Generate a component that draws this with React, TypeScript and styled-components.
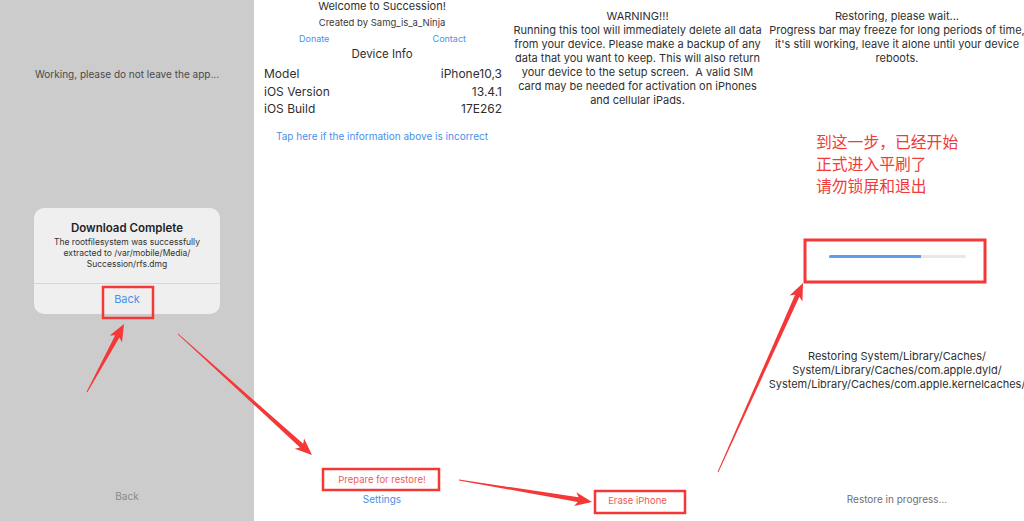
import React from "react";
import styled, { createGlobalStyle } from "styled-components";

const Global = createGlobalStyle`
  html, body { margin: 0; padding: 0; background: #ffffff; }
  body { font-family: Inter, "Open Sans", "Noto Sans", sans-serif; -webkit-font-smoothing: antialiased; }
`;

const Page = styled.div`
  position: relative;
  width: 1024px;
  height: 521px;
  overflow: hidden;
  display: grid;
  grid-template-columns: 254px 256px 255px 264px;
  background: #ffffff;
`;

const Panel = styled.section<{ $gray?: boolean }>`
  height: 521px;
  display: flex;
  flex-direction: column;
  align-items: stretch;
  background: ${(p) => (p.$gray ? "#cccccc" : "#ffffff")};
  color: #333333;
  overflow: hidden;
`;

const Line = styled.div<{ $size?: number; $lh?: number; $mt?: number; $color?: string; $weight?: number }>`
  font-size: ${(p) => p.$size ?? 11}px;
  line-height: ${(p) => p.$lh ?? 14}px;
  margin-top: ${(p) => p.$mt ?? 0}px;
  color: ${(p) => p.$color ?? "#333333"};
  font-weight: ${(p) => p.$weight ?? 400};
  text-align: center;
  white-space: nowrap;
`;

const Bottom = styled.div<{ $pb: number }>`
  margin-top: auto;
  padding-bottom: ${(p) => p.$pb}px;
  display: flex;
  flex-direction: column;
  align-items: center;
  gap: 5px;
`;

const Dialog = styled.div`
  margin: 127px auto 0;
  width: 186px;
  background: #efefef;
  border-radius: 10px;
  display: flex;
  flex-direction: column;
  align-items: center;
`;

const DialogBody = styled.div`
  padding: 13px 8px 13px;
  display: flex;
  flex-direction: column;
  align-items: center;
`;

const DialogFooter = styled.div`
  align-self: stretch;
  border-top: 1px solid #d6d6d6;
  height: 30px;
  display: flex;
  align-items: center;
  justify-content: center;
  font-size: 11px;
  color: #4a90e8;
`;

const LinkRow = styled.div`
  display: flex;
  justify-content: space-between;
  padding: 0 44px 0 45px;
  margin-top: 4px;
  font-size: 9px;
  line-height: 12px;
  color: #4a90e8;
`;

const InfoRow = styled.div<{ $mt: number }>`
  display: flex;
  justify-content: space-between;
  padding: 0 8px 0 10px;
  margin-top: ${(p) => p.$mt}px;
  font-size: 12px;
  line-height: 15px;
  color: #2f2f2f;
`;

const Chinese = styled.div`
  margin: 66px 0 0 51px;
  font-family: "Noto Sans CJK SC", "Noto Sans", sans-serif;
  font-size: 15.8px;
  line-height: 22px;
  color: #f23a3a;
  white-space: nowrap;
`;

const Track = styled.div`
  margin: 58px 0 0 64px;
  width: 137px;
  height: 3px;
  border-radius: 2px;
  background: #e8e8e8;
  overflow: hidden;
`;

const Fill = styled.div`
  height: 100%;
  background: #5c9ded;
`;

const Overlay = styled.svg`
  position: absolute;
  left: 0;
  top: 0;
  width: 1024px;
  height: 521px;
  pointer-events: none;
`;

function arrowPoints(tx: number, ty: number, px: number, py: number, headLen = 17, headW = 7, shaftW = 2.4) {
  const dx = px - tx;
  const dy = py - ty;
  const len = Math.hypot(dx, dy);
  const ux = dx / len;
  const uy = dy / len;
  const nx = -uy;
  const ny = ux;
  const bx = px - ux * headLen;
  const by = py - uy * headLen;
  const pts = [
    [tx + nx * 0.4, ty + ny * 0.4],
    [bx + ux * 3 + nx * shaftW, by + uy * 3 + ny * shaftW],
    [bx + nx * headW, by + ny * headW],
    [px, py],
    [bx - nx * headW, by - ny * headW],
    [bx + ux * 3 - nx * shaftW, by + uy * 3 - ny * shaftW],
    [tx - nx * 0.4, ty - ny * 0.4],
  ];
  return pts.map((p) => `${p[0].toFixed(1)},${p[1].toFixed(1)}`).join(" ");
}

const RED = "#f43838";

const arrows: [number, number, number, number][] = [
  [87, 392, 124, 324],
  [178, 334, 312, 455],
  [459, 480, 592, 502],
  [718, 472, 803, 283],
];

const boxes: [number, number, number, number][] = [
  [103, 287, 153, 318],
  [323, 469, 439, 490],
  [595, 491, 685, 513],
  [805, 240, 985, 282],
];

export default function App() {
  const progress = 67;
  return (
    <>
      <Global />
      <Page>
        <Panel $gray>
          <Line $size={10} $mt={67} $color="#4a4a4a">Working, please do not leave the app...</Line>
          <Dialog>
            <DialogBody>
              <Line $size={11.5} $lh={14} $weight={600} $color="#1f1f1f">Download Complete</Line>
              <Line $size={8.5} $lh={11} $mt={2} $color="#333">The rootfilesystem was successfully</Line>
              <Line $size={8.5} $lh={11} $color="#333">extracted to /var/mobile/Media/</Line>
              <Line $size={8.5} $lh={11} $color="#333">Succession/rfs.dmg</Line>
            </DialogBody>
            <DialogFooter>Back</DialogFooter>
          </Dialog>
          <Bottom $pb={18}>
            <Line $size={10} $color="#8a8a8a">Back</Line>
          </Bottom>
        </Panel>

        <Panel>
          <Line $size={11} $lh={13} $mt={0} $color="#2f2f2f">Welcome to Succession!</Line>
          <Line $size={9.5} $lh={12} $mt={4} $color="#3a3a3a">Created by Samg_is_a_Ninja</Line>
          <LinkRow>
            <span>Donate</span>
            <span>Contact</span>
          </LinkRow>
          <Line $size={11.5} $lh={14} $mt={2} $color="#2f2f2f">Device Info</Line>
          <InfoRow $mt={5}>
            <span>Model</span>
            <span>iPhone10,3</span>
          </InfoRow>
          <InfoRow $mt={3}>
            <span>iOS Version</span>
            <span>13.4.1</span>
          </InfoRow>
          <InfoRow $mt={2}>
            <span>iOS Build</span>
            <span>17E262</span>
          </InfoRow>
          <Line $size={10} $lh={12} $mt={14} $color="#4a90e8">Tap here if the information above is incorrect</Line>
          <Bottom $pb={15}>
            <Line $size={9.5} $color="#f05a5a">Prepare for restore!</Line>
            <Line $size={10} $color="#4a90e8">Settings</Line>
          </Bottom>
        </Panel>

        <Panel>
          <Line $size={11} $mt={9} $color="#2f2f2f">WARNING!!!</Line>
          <Line $size={11} $color="#2f2f2f">Running this tool will immediately delete all data</Line>
          <Line $size={11} $color="#2f2f2f">from your device. Please make a backup of any</Line>
          <Line $size={11} $color="#2f2f2f">data that you want to keep. This will also return</Line>
          <Line $size={11} $color="#2f2f2f">your device to the setup screen.&nbsp; A valid SIM</Line>
          <Line $size={11} $color="#2f2f2f">card may be needed for activation on iPhones</Line>
          <Line $size={11} $color="#2f2f2f">and cellular iPads.</Line>
          <Bottom $pb={13}>
            <Line $size={9.5} $color="#f05a5a">Erase iPhone</Line>
          </Bottom>
        </Panel>

        <Panel>
          <Line $size={11} $mt={9} $color="#2f2f2f">Restoring, please wait...</Line>
          <Line $size={11} $color="#2f2f2f">Progress bar may freeze for long periods of time,</Line>
          <Line $size={11} $color="#2f2f2f">it's still working, leave it alone until your device</Line>
          <Line $size={11} $color="#2f2f2f">reboots.</Line>
          <Chinese>
            到这一步，已经开始
            <br />
            正式进入平刷了
            <br />
            请勿锁屏和退出
          </Chinese>
          <Track>
            <Fill style={{ width: `${progress}%` }} />
          </Track>
          <Line $size={11} $mt={91} $color="#2f2f2f">Restoring System/Library/Caches/</Line>
          <Line $size={11} $color="#2f2f2f">System/Library/Caches/com.apple.dyld/</Line>
          <Line $size={11} $color="#2f2f2f">System/Library/Caches/com.apple.kernelcaches/</Line>
          <Bottom $pb={15}>
            <Line $size={10} $color="#6f6f6f">Restore in progress...</Line>
          </Bottom>
        </Panel>

        <Overlay viewBox="0 0 1024 521">
          {boxes.map(([x1, y1, x2, y2], i) => (
            <rect key={i} x={x1} y={y1} width={x2 - x1} height={y2 - y1} fill="none" stroke={RED} strokeWidth={i === 3 ? 3 : 2.5} />
          ))}
          {arrows.map(([tx, ty, px, py], i) => (
            <polygon key={i} points={arrowPoints(tx, ty, px, py)} fill={RED} />
          ))}
        </Overlay>
      </Page>
    </>
  );
}
